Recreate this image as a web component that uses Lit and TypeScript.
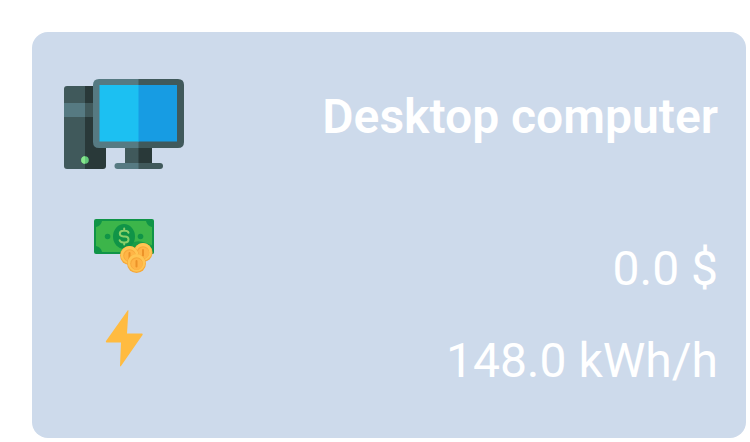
import { LitElement, html, css, svg } from "lit";
import { customElement, property } from "lit/decorators.js";

const computerIcon = html`<svg class="icon large" viewBox="0 0 120 120" aria-hidden="true">
  <path fill="#40595b" d="M3 22H32V105H3Q0 105 0 102V25Q0 22 3 22Z" />
  <path fill="#293939" d="M21 22H42V102Q42 105 39 105H21Z" />
  <path fill="#567a82" d="M0 39H21V53H0Z" />
  <path fill="#40595b" d="M21 39H32V53H21Z" />
  <circle cx="21" cy="96" r="3.8" fill="#63c778" />
  <path fill="#86e68c" d="M21 92.2a3.8 3.8 0 0 0 0 7.6Z" />
  <path fill="#40595b" d="M61 82H75V101H61Z" />
  <path fill="#293939" d="M74.500 82H88V101H74.500Z" />
  <path fill="#567a82" d="M53.500 99H75V105H53.500a3 3 0 0 1 0-6Z" />
  <path fill="#40595b" d="M74.500 99H96a3 3 0 0 1 0 6H74.500Z" />
  <path fill="#567a82" d="M35 15H75V84H35Q29 84 29 78V21Q29 15 35 15Z" />
  <path fill="#40595b" d="M74.500 15H114Q120 15 120 21V78Q120 84 114 84H74.500Z" />
  <path fill="#1cc0f2" d="M35.500 21H75V77.500H35.500Z" />
  <path fill="#179ce3" d="M74.500 21H113V77.500H74.500Z" />
</svg>`;

const coin = (x: number, y: number) => svg`
  <circle cx=${x} cy=${y} r="9.5" fill="#f6a83a" />
  <circle cx=${x} cy=${y - 0.6} r="8.8" fill="#ffc553" />
  <circle cx=${x} cy=${y} r="6.3" fill="#f6a83a" />
  <circle cx=${x + 0.4} cy=${y + 0.5} r="5.7" fill="#ffb547" />
  <rect x=${x - 1} y=${y - 3.6} width="2" height="7.600" rx="1" fill="#ec9228" />`;

const moneyIcon = html`<svg class="icon" viewBox="0 0 60 60" aria-hidden="true">
  <rect y="3" width="60" height="35" rx="2" fill="#109447" />
  <path fill="#3cb54a" d="M8 5H52Q53 10 58 11V30Q53 31 52 36H8Q7 31 2 30V11Q7 10 8 5Z" />
  <ellipse cx="30" cy="20.500" rx="11" ry="12.500" fill="#109447" />
  <circle cx="13.600" cy="20.500" r="2.800" fill="#109447" />
  <circle cx="46.500" cy="20.500" r="2.800" fill="#109447" />
  <path fill="none" stroke="#8bcf69" stroke-width="2" stroke-linecap="round"
    d="M34.500 16.800Q34 14.800 31 14.800H29.500Q25.800 14.800 25.800 17.600T29.500 20.500H31Q34.500 20.500 34.500 23.500T31 26.500H29.300Q26 26.500 25.600 24.200M30.200 12.500V14.500M30.200 26.500V28.500" />
  <path fill="#109447" d="M35 28Q43 23 52 27L60 30V36Q60 38 58 38H35Z" opacity=".75" />
  ${coin(49, 36.5)} ${coin(35.5, 39.5)} ${coin(42.5, 47.5)}
</svg>`;

const powerIcon = html`<svg class="icon" viewBox="0 0 60 60" aria-hidden="true">
  <path fill="#ffbb40" d="M34 2Q34.500 2 34.400 3L33 25.500H48Q49.200 25.700 48.500 27L27 58Q26 59 26 57.500L27 34.500H12.500Q11.400 34.200 12 33Z" />
</svg>`;

@customElement("app-root")
export class AppRoot extends LitElement {
  @property() name = "Desktop computer";
  @property({ type: Number }) cost = 0;
  @property({ type: Number }) power = 148;

  static styles = css`
    :host {
      display: block;
      padding: 32px 4px 4px 32px;
      background: #fff;
      font-family: Roboto, sans-serif;
    }
    .card {
      padding: 32px 28px 38px 32px;
      border-radius: 16px;
      background: #cddaeb;
      color: #fff;
    }
    .row {
      display: grid;
      grid-template-columns: 120px 1fr;
      align-items: start;
      justify-items: center;
    }
    .icon {
      display: block;
      width: 60px;
      height: 60px;
      margin-bottom: 32px;
    }
    .large {
      width: 120px;
      height: 120px;
    }
    .text {
      justify-self: end;
      margin: 0;
      padding-top: 25px;
      font-size: 48px;
      line-height: 56px;
      font-weight: 400;
      text-align: right;
    }
    .title {
      font-weight: 600;
    }
  `;

  render() {
    return html`<article class="card">
      <header class="row">${computerIcon}<h2 class="text title">${this.name}</h2></header>
      <div class="row">${moneyIcon}<p class="text">${this.cost.toFixed(1)} $</p></div>
      <div class="row">${powerIcon}<p class="text">${this.power.toFixed(1)} kWh/h</p></div>
    </article>`;
  }
}
